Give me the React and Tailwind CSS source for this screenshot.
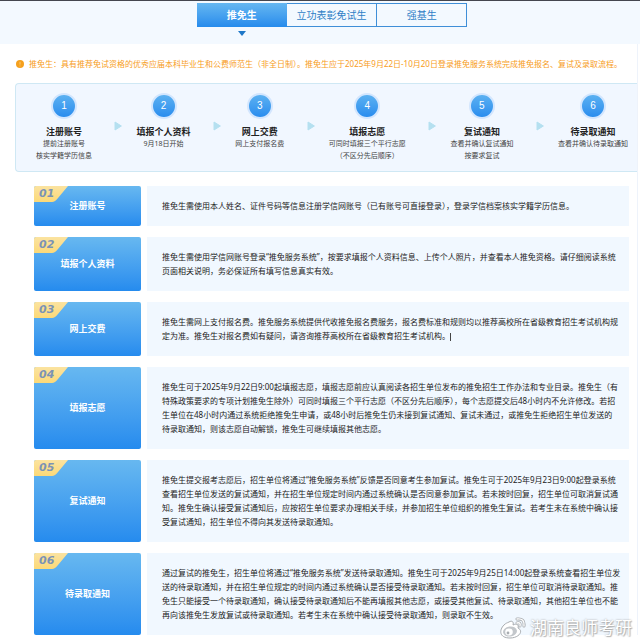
import React, { useState } from 'react';

const tabs = ['推免生', '立功表彰免试生', '强基生'];

const steps = [
  { title: '注册账号', notes: ['提前注册账号', '核实学籍学历信息'] },
  { title: '填报个人资料', notes: ['9月18日开始'] },
  { title: '网上交费', notes: ['网上支付报名费'] },
  { title: '填报志愿', notes: ['可同时填报三个平行志愿', '（不区分先后顺序）'] },
  { title: '复试通知', notes: ['查看并确认复试通知', '按要求复试'] },
  { title: '待录取通知', notes: ['查看并确认待录取通知'] },
];

const details = [
  {
    title: '注册账号',
    lines: ['推免生需使用本人姓名、证件号码等信息注册学信网账号（已有账号可直接登录），登录学信档案核实学籍学历信息。'],
  },
  {
    title: '填报个人资料',
    lines: [
      '推免生需使用学信网账号登录“推免服务系统”，按要求填报个人资料信息、上传个人照片，并查看本人推免资格。请仔细阅读系统',
      '页面相关说明，务必保证所有填写信息真实有效。',
    ],
  },
  {
    title: '网上交费',
    caret: true,
    lines: [
      '推免生需网上支付报名费。推免服务系统提供代收推免报名费服务，报名费标准和规则均以推荐高校所在省级教育招生考试机构规',
      '定为准。推免生对报名费如有疑问，请咨询推荐高校所在省级教育招生考试机构。',
    ],
  },
  {
    title: '填报志愿',
    lines: [
      '推免生可于2025年9月22日9:00起填报志愿，填报志愿前应认真阅读各招生单位发布的推免招生工作办法和专业目录。推免生（有',
      '特殊政策要求的专项计划推免生除外）可同时填报三个平行志愿（不区分先后顺序），每个志愿提交后48小时内不允许修改。若招',
      '生单位在48小时内通过系统拒绝推免生申请，或48小时后推免生仍未接到复试通知、复试未通过，或推免生拒绝招生单位发送的',
      '待录取通知，则该志愿自动解锁，推免生可继续填报其他志愿。',
    ],
  },
  {
    title: '复试通知',
    lines: [
      '推免生提交报考志愿后，招生单位将通过“推免服务系统”反馈是否同意考生参加复试。推免生可于2025年9月23日9:00起登录系统',
      '查看招生单位发送的复试通知，并在招生单位规定时间内通过系统确认是否同意参加复试。若未按时回复，招生单位可取消复试通',
      '知。推免生确认接受复试通知后，应按招生单位要求办理相关手续，并参加招生单位组织的推免生复试。若考生未在系统中确认接',
      '受复试通知，招生单位不得向其发送待录取通知。',
    ],
  },
  {
    title: '待录取通知',
    lines: [
      '通过复试的推免生，招生单位将通过“推免服务系统”发送待录取通知。推免生可于2025年9月25日14:00起登录系统查看招生单位发',
      '送的待录取通知，并在招生单位规定的时间内通过系统确认是否接受待录取通知。若未按时回复，招生单位可取消待录取通知。推',
      '免生只能接受一个待录取通知，确认接受待录取通知后不能再填报其他志愿，或接受其他复试、待录取通知，其他招生单位也不能',
      '再向该推免生发放复试或待录取通知。若考生未在系统中确认接受待录取通知，则录取不生效。',
    ],
  },
];

const Arrow = () => (
  <svg viewBox="0 0 8 10" className="h-[10px] w-2" aria-hidden="true">
    <path d="M1 1 L7.4 5 L1 9 Z" fill="#b5e0f0" stroke="#b5e0f0" strokeLinejoin="round" />
  </svg>
);

const Step = ({ step, number }) => (
  <li className="flex flex-col items-center whitespace-nowrap">
    <span className="flex h-[26px] w-[26px] items-center justify-center rounded-full border-2 border-[#d3e6fe] bg-linear-to-b from-[#5fb4f1] to-[#2489ee] bg-origin-border font-['Liberation_Sans',sans-serif] text-[10px] leading-none text-white">
      {number}
    </span>
    <h3 className="mt-[7px] text-[9px] leading-[12px] font-bold text-[#222]">{step.title}</h3>
    {step.notes.map((note) => (
      <p key={note} className="text-[7px] leading-[12px] text-[#444]">{note}</p>
    ))}
  </li>
);

const DetailRow = ({ item, number }) => (
  <section className="flex gap-[6px]">
    <div className="relative flex w-[107px] shrink-0 items-center justify-center rounded-xs bg-linear-to-b from-[#67b8f0] to-[#258bee]">
      <svg viewBox="0 0 34 16" className="absolute top-0 left-0 h-4 w-[34px]" aria-hidden="true">
        <defs>
          <linearGradient id={`badge-${number}`} x1="0" y1="0" x2="0" y2="1">
            <stop offset="0" stopColor="#fbe3a0" />
            <stop offset="1" stopColor="#fcd978" />
          </linearGradient>
        </defs>
        <path d="M2 0 H34 L24 12 Q21 16 18 16 H0 V2 Q0 0 2 0 Z" fill={`url(#badge-${number})`} />
      </svg>
      <span className="absolute top-[2px] left-[5px] font-['DejaVu_Sans',sans-serif] text-[11px] leading-[12px] font-bold text-[#7b93b5] italic">
        0{number}
      </span>
      <h2 className="text-[9px] leading-[14px] font-bold text-white">{item.title}</h2>
    </div>
    <p className="min-w-0 flex-1 bg-[#f1f8ff] py-[13px] pl-[15px] text-[8px] leading-[14px] whitespace-nowrap text-[#222]">
      {item.lines.map((line, i) => (
        <React.Fragment key={line}>
          {i > 0 && <br />}
          {line}
        </React.Fragment>
      ))}
      {item.caret && <span className="inline-block h-2 w-px bg-[#444] align-middle" />}
    </p>
  </section>
);

const Watermark = () => (
  <div className="absolute right-2 bottom-1 flex items-center gap-1 text-white [text-shadow:0_0_2px_#999,1px_1px_1px_#bbb]">
    <svg viewBox="0 0 26 22" className="h-[22px] w-[26px]" fill="none" aria-hidden="true">
      <g stroke="#a9adb1" strokeWidth="3" strokeLinecap="round">
        <path d="M17 6 Q21 5 20 9" />
        <path d="M17 2 Q25 1 24 9" />
      </g>
      <path
        d="M9 5 C12 3 14 5 13 8 C17 6 19 8 18 11 C24 14 19 21 10 21 C-1 21 -1 13 4 8 C6 6 7 6 9 5 Z"
        fill="#fff"
        stroke="#a9adb1"
      />
      <ellipse cx="10" cy="14.5" rx="7" ry="5" fill="#c3c7cb" transform="rotate(-8 10 14.5)" />
      <ellipse cx="9" cy="15" rx="3.8" ry="3.4" fill="#fff" />
      <circle cx="8" cy="16" r="1.4" fill="#a9adb1" />
      <path d="M17 6 Q21 5 20 9 M17 2 Q25 1 24 9" stroke="#fff" strokeWidth="1.4" strokeLinecap="round" />
    </svg>
    <span className="text-[17px] leading-[22px]">湖南良师考研</span>
  </div>
);

export default function App() {
  const [active, setActive] = useState(0);

  return (
    <div className="relative overflow-hidden bg-white pb-2 font-['Noto_Sans','Noto_Sans_CJK_SC',sans-serif]">
      <header className="border-t border-[#44464f] bg-[#f3f9ff] pt-[2px] pl-6">
        <nav className="mx-auto flex h-[41px] w-[271px] items-start">
          {tabs.map((tab, i) => (
            <div key={tab} className="flex flex-1 flex-col items-center">
              <button
                type="button"
                onClick={() => setActive(i)}
                className={
                  i === active
                    ? 'h-6 w-full bg-linear-to-b from-[#65b7f1] to-[#258bec] text-[10px] font-bold text-white'
                    : 'h-6 w-full border border-l-0 border-[#3f8fd8] text-[10px] text-[#2f7fc6]'
                }
              >
                {tab}
              </button>
              {i === active && (
                <svg viewBox="0 0 8 5" className="mt-1 h-[5px] w-2" aria-hidden="true">
                  <path d="M0 0 H8 L4 5 Z" fill="#1f78c8" />
                </svg>
              )}
            </div>
          ))}
        </nav>
      </header>

      <main className="mr-[2px] border-r border-[#eef3fb] pt-3">
        <div className="flex items-center gap-[5px] pl-4 text-[8px] leading-4 whitespace-nowrap text-[#f79c1b]">
          <svg viewBox="0 0 8 8" className="h-2 w-2 shrink-0" aria-hidden="true">
            <circle cx="4" cy="4" r="4" fill="#f5a01d" />
            <path d="M4 1.8 V4.6 M4 5.6 V6.4" stroke="#fbc976" />
          </svg>
          <p>推免生：具有推荐免试资格的优秀应届本科毕业生和公费师范生（非全日制）。推免生应于2025年9月22日-10月20日登录推免服务系统完成推免报名、复试及录取流程。</p>
        </div>

        <ol className="mt-[11px] ml-[15px] flex h-[89px] justify-between rounded-l border border-r-0 border-[#cfe8f4] bg-[#f1f7ff] pt-[9px] pr-[9px] pl-5">
          {steps.map((step, i) => (
            <React.Fragment key={step.title}>
              {i > 0 && (
                <li className="pt-7 pl-2">
                  <Arrow />
                </li>
              )}
              <Step step={step} number={i + 1} />
            </React.Fragment>
          ))}
        </ol>

        <div className="mt-[14px] flex flex-col gap-[11px] pr-2 pl-[34px]">
          {details.map((item, i) => (
            <DetailRow key={item.title} item={item} number={i + 1} />
          ))}
        </div>
      </main>

      <Watermark />
    </div>
  );
}
